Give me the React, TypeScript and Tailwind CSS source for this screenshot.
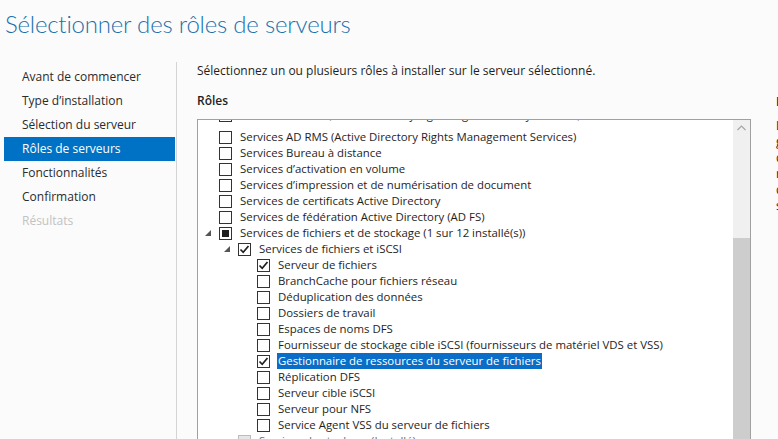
import React from 'react'

type Row = {
  label: string
  level: 0 | 1 | 2
  state?: 'off' | 'on' | 'mixed' | 'installed'
  arrow?: boolean
  selected?: boolean
}

const NAV = [
  { label: 'Avant de commencer' },
  { label: 'Type d’installation' },
  { label: 'Sélection du serveur' },
  { label: 'Rôles de serveurs', active: true },
  { label: 'Fonctionnalités' },
  { label: 'Confirmation' },
  { label: 'Résultats', disabled: true },
]

const ROWS: Row[] = [
  { label: 'Services AD LDS (Active Directory Lightweight Directory Services)', level: 0 },
  { label: 'Services AD RMS (Active Directory Rights Management Services)', level: 0 },
  { label: 'Services Bureau à distance', level: 0 },
  { label: 'Services d’activation en volume', level: 0 },
  { label: 'Services d’impression et de numérisation de document', level: 0 },
  { label: 'Services de certificats Active Directory', level: 0 },
  { label: 'Services de fédération Active Directory (AD FS)', level: 0 },
  { label: 'Services de fichiers et de stockage (1 sur 12 installé(s))', level: 0, state: 'mixed', arrow: true },
  { label: 'Services de fichiers et iSCSI', level: 1, state: 'on', arrow: true },
  { label: 'Serveur de fichiers', level: 2, state: 'on' },
  { label: 'BranchCache pour fichiers réseau', level: 2 },
  { label: 'Déduplication des données', level: 2 },
  { label: 'Dossiers de travail', level: 2 },
  { label: 'Espaces de noms DFS', level: 2 },
  { label: 'Fournisseur de stockage cible iSCSI (fournisseurs de matériel VDS et VSS)', level: 2 },
  { label: 'Gestionnaire de ressources du serveur de fichiers', level: 2, state: 'on', selected: true },
  { label: 'Réplication DFS', level: 2 },
  { label: 'Serveur cible iSCSI', level: 2 },
  { label: 'Serveur pour NFS', level: 2 },
  { label: 'Service Agent VSS du serveur de fichiers', level: 2 },
  { label: 'Services de stockage (Installé)', level: 1, state: 'installed' },
]

const DESCRIPTION = [
  'Le Gestionnaire de ressources du serveur',
  'gère et classifie les données stockées sur',
  'des serveurs de fichiers. Il permet de',
  'réaliser des quotas, des filtres et des',
  'des rapports de stockage sur les',
  'serveurs de fichiers.',
]

const INDENT = ['pl-[5px]', 'pl-[24px]', 'pl-[43px]']

function Arrow() {
  return (
    <svg width="6" height="6" viewBox="0 0 6 6" className="ml-[2px]">
      <path d="M6 0 L6 6 L0 6 Z" fill="#555" />
    </svg>
  )
}

function Checkbox({ state = 'off' }: { state?: Row['state'] }) {
  if (state === 'installed') {
    return <div className="w-[13px] h-[13px] shrink-0 border border-[#bcbcbc] bg-[#e6e6e6]" />
  }
  return (
    <div className="w-[13px] h-[13px] shrink-0 border border-[#333] bg-white flex items-center justify-center">
      {state === 'mixed' && <div className="w-[7px] h-[7px] bg-[#1f1f1f]" />}
      {state === 'on' && (
        <svg width="11" height="11" viewBox="0 0 11 11">
          <path d="M1.5 5.5 L4.2 8.3 L9.5 2" stroke="#1f1f1f" strokeWidth="1.7" fill="none" />
        </svg>
      )}
    </div>
  )
}

export default function App() {
  return (
    <div
      className="w-[778px] h-[439px] overflow-hidden bg-[#fbfbfb] text-[#1e1e1e]"
      style={{ fontFamily: '"Open Sans", "Noto Sans", sans-serif' }}
    >
      <h1
        className="pl-[5px] pt-[8px] h-[62px] text-[24px] font-light text-[#1a70ad] tracking-[-0.2px] leading-[32px]"
        style={{ fontFamily: 'Lato, "Open Sans", sans-serif' }}
      >
        Sélectionner des rôles de serveurs
      </h1>

      <div className="flex">
        {/* Nav */}
        <div className="w-[177px] shrink-0 pl-[4px] border-r border-[#d4d4d4] h-[400px]">
          <div className="pt-[3px] w-[171px]">
            {NAV.map((n) => (
              <div
                key={n.label}
                className={`h-6 pl-[18px] flex items-center text-[12px] ${
                  n.active ? 'bg-[#0072c6] text-white' : n.disabled ? 'text-[#c2c2c2]' : 'text-[#2b2b2b]'
                }`}
              >
                {n.label}
              </div>
            ))}
          </div>
        </div>

        {/* Content */}
        <div className="pl-[20px] w-[574px] shrink-0 text-[12px]">
          <div className="h-[18px] flex items-center">
            Sélectionnez un ou plusieurs rôles à installer sur le serveur sélectionné.
          </div>
          <div className="h-[18px] mt-[12px] flex items-center font-semibold">Rôles</div>
          <div className="mt-[9px] w-[554px] h-[340px] border border-[#a0a0a0] bg-white flex overflow-hidden">
            <div className="flex-1 overflow-hidden text-[11.4px]">
              <div className="-mt-[13px]">
                {ROWS.map((r, i) => (
                  <div
                    key={r.label}
                    className={`h-4 flex items-center whitespace-nowrap ${INDENT[r.level]} ${i === 1 ? 'mt-[6px]' : ''}`}
                  >
                    <div className="w-4 shrink-0 flex items-center">{r.arrow && <Arrow />}</div>
                    <Checkbox state={r.state} />
                    <span
                      className={`ml-[7px] px-[1px] leading-4 ${
                        r.selected ? 'bg-[#0a6ec8] text-white' : r.state === 'installed' ? 'text-[#6d6d6d]' : ''
                      }`}
                    >
                      {r.label}
                    </span>
                  </div>
                ))}
              </div>
            </div>
            <div className="w-[17px] shrink-0 flex flex-col">
              <div className="h-[118px] bg-[#f0f0f0] flex justify-center pt-[5px]">
                <svg width="9" height="6" viewBox="0 0 9 6">
                  <path d="M0.5 5 L4.5 1 L8.5 5" stroke="#a6a6a6" strokeWidth="1.2" fill="none" />
                </svg>
              </div>
              <div className="flex-1 bg-[#cdcdcd]" />
            </div>
          </div>
        </div>

        {/* Description */}
        <div className="pl-[25px] w-[240px] shrink-0 text-[12px]">
          <div className="h-[18px] mt-[31px] flex items-center font-semibold">Description</div>
          <div className="mt-[7px] leading-4 whitespace-nowrap">
            {DESCRIPTION.map((l) => (
              <div key={l} className="h-4">
                {l}
              </div>
            ))}
          </div>
        </div>
      </div>
    </div>
  )
}
